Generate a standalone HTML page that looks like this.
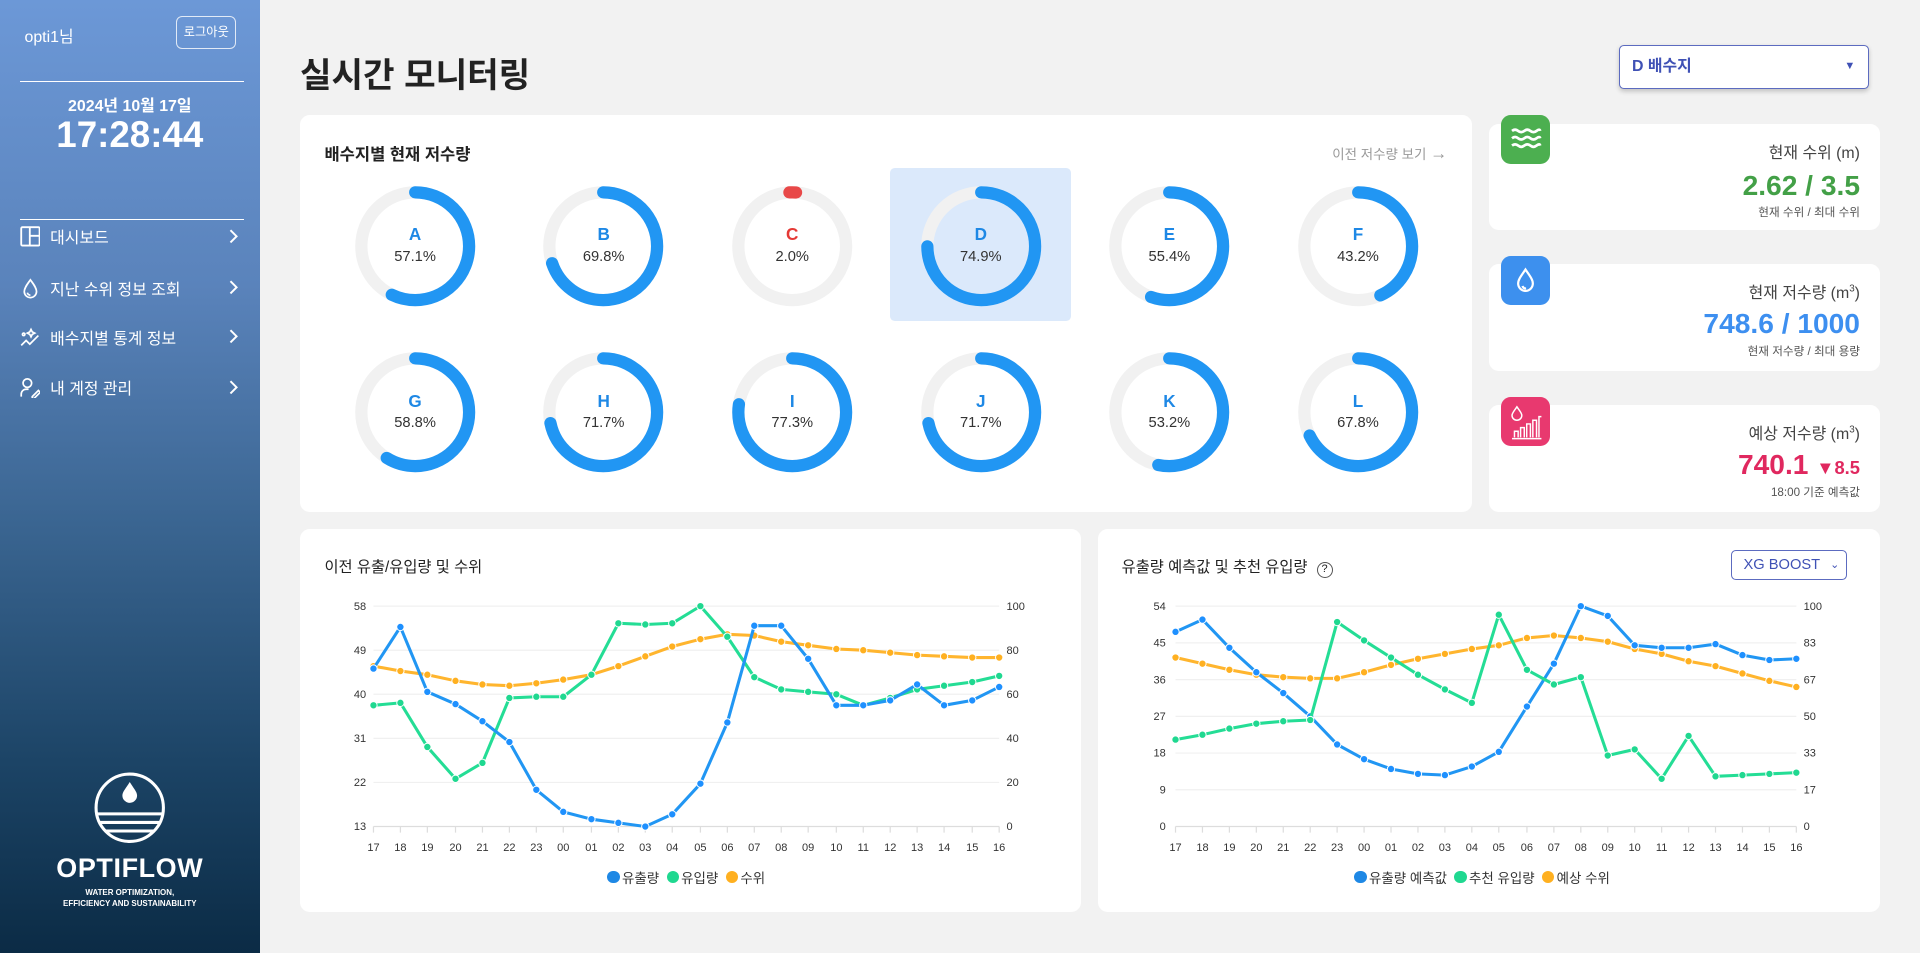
<!DOCTYPE html>
<html><head><meta charset="utf-8">
<style>
*{margin:0;padding:0;box-sizing:border-box}
html,body{width:1920px;height:953px;overflow:hidden;background:#f2f2f2}
body{font-family:"Liberation Sans","Noto Sans CJK KR",sans-serif;color:#222}
#w{position:relative;width:1568px;height:778px;zoom:1.22449;background:#f2f2f2}
.a{position:absolute}
#side{left:0;top:0;width:212px;height:778px;background:linear-gradient(180deg,#6c98d7 0%,#5a83bb 30%,#3a6591 55%,#1c4466 80%,#0b2b45 100%);color:#fff}
.card{background:#fff;border-radius:8px}
.menu{left:16px;font-size:13px;display:flex;align-items:center;width:180px}
.menu span{margin-left:8px}
.menu .ch{position:absolute;right:0;top:3px}
.dn{width:100px;height:100px;text-align:center}
.dn b{position:absolute;left:0;right:0;top:32px;font-size:14px;color:#1e88e5}
.dn i{position:absolute;left:0;right:0;top:52px;font-size:12px;font-style:normal;color:#333}
.st{text-align:right;right:16px}
.lab{font-size:13px;color:#444}
.val{font-size:23px;font-weight:bold}
.sub{font-size:9.5px;color:#555}
.ic{width:40px;height:40px;border-radius:8px}
.ax{font-size:9px;fill:#333;font-family:"Liberation Sans",sans-serif}
.lg{font-size:11px;color:#333;display:flex;align-items:center}
.lg em{display:inline-block;width:10px;height:10px;border-radius:50%;margin:0 2px 0 6px}
</style></head><body><div id="w">
<div id="side" class="a">
 <div class="a" style="left:20px;top:20px;font-size:13px">opti1님</div>
 <div class="a" style="left:144px;top:13px;width:49px;height:27px;border:1px solid rgba(255,255,255,.8);border-radius:5px;font-size:10px;line-height:25px;text-align:center">로그아웃</div>
 <div class="a" style="left:16px;top:66px;width:183px;height:1px;background:#fff"></div>
 <div class="a" style="left:0;width:212px;top:76px;text-align:center;font-size:13px;font-weight:bold">2024년 10월 17일</div>
 <div class="a" style="left:0;width:212px;top:93px;text-align:center;font-size:30px;font-weight:bold">17:28:44</div>
 <div class="a" style="left:16px;top:179px;width:183px;height:1px;background:#fff"></div>
 <div class="a menu" style="top:184px"><svg width="17" height="17" viewBox="0 0 17 17" fill="none" stroke="#fff" stroke-width="1.5"><rect x="1" y="1" width="15" height="15" rx="1"/><path d="M8 1v15M8 8h8"/></svg><span>대시보드</span><svg class="ch" width="10" height="12"><path d="M2 1l5 5-5 5" fill="none" stroke="#fff" stroke-width="1.6"/></svg></div>
 <div class="a menu" style="top:226px"><svg width="17" height="17" viewBox="0 0 17 17" fill="none" stroke="#fff" stroke-width="1.4"><path d="M8.5 1.5C6 5 3.5 8 3.5 11a5 5 0 0 0 10 0c0-3-2.5-6-5-9.5z"/><path d="M6 12a2.5 2.5 0 0 0 2.5 2"/></svg><span>지난 수위 정보 조회</span><svg class="ch" width="10" height="12"><path d="M2 1l5 5-5 5" fill="none" stroke="#fff" stroke-width="1.6"/></svg></div>
 <div class="a menu" style="top:266px"><svg width="17" height="17" viewBox="0 0 17 17" fill="none" stroke="#fff" stroke-width="1.4"><path d="M1 15l4-4 3 3 7-7"/><path d="M9 2l1 2 2 1-2 1-1 2-1-2-2-1 2-1z"/><circle cx="3" cy="6" r="1"/></svg><span>배수지별 통계 정보</span><svg class="ch" width="10" height="12"><path d="M2 1l5 5-5 5" fill="none" stroke="#fff" stroke-width="1.6"/></svg></div>
 <div class="a menu" style="top:307px"><svg width="17" height="17" viewBox="0 0 17 17" fill="none" stroke="#fff" stroke-width="1.4"><circle cx="6" cy="5" r="3.5"/><path d="M1 16v-2a4 4 0 0 1 4-4h2"/><path d="M10 16l5-5 1.5 1.5-5 5H10z"/></svg><span>내 계정 관리</span><svg class="ch" width="10" height="12"><path d="M2 1l5 5-5 5" fill="none" stroke="#fff" stroke-width="1.6"/></svg></div>
 <svg class="a" style="left:76px;top:630px" width="60" height="60" viewBox="0 0 60 60" fill="none" stroke="#fff" stroke-width="2.5"><circle cx="30" cy="30" r="27.5"/><path d="M30 9c-3 5-6 8-6 11a6 6 0 0 0 12 0c0-3-3-6-6-11z" fill="#fff" stroke="none"/><path d="M4 35h52M6 42h48M10 49h40"/></svg>
 <div class="a" style="left:0;width:212px;top:697px;text-align:center;font-size:22px;font-weight:bold;letter-spacing:.5px">OPTIFLOW</div>
 <div class="a" style="left:0;width:212px;top:724px;text-align:center;font-size:6.5px;line-height:9.5px;font-weight:bold">WATER OPTIMIZATION,<br>EFFICIENCY AND SUSTAINABILITY</div>
</div>

<div class="a" style="left:245px;top:38px;font-size:28px;font-weight:bold;color:#222">실시간 모니터링</div>
<div class="a" style="left:1322px;top:37px;width:204px;height:36px;background:#fff;border:1px solid #5c6bc0;border-radius:4px;box-shadow:0 2px 4px rgba(0,0,0,.2);font-size:13px;color:#3f51b5;line-height:34px;padding-left:10px;font-weight:bold">D 배수지<span style="position:absolute;right:10px;font-size:9px">▼</span></div>

<div class="a card" style="left:245px;top:94px;width:957px;height:324px"></div>
<div class="a" style="left:265px;top:115px;font-size:13.5px;font-weight:bold">배수지별 현재 저수량</div>
<div class="a" style="left:1088px;top:117px;font-size:11px;color:#999">이전 저수량 보기 <span style="font-size:14px">→</span></div>
<div class="a" style="left:727px;top:137px;width:148px;height:125px;background:#dbe9fb;border-radius:4px"></div>

<svg width="0" height="0" style="position:absolute"><defs>
<g id="tr"><circle cx="50" cy="50" r="44" fill="none" stroke="#f1f1f1" stroke-width="10"/></g>
</defs></svg>

<div class="a dn" style="left:289px;top:151px"><svg width="100" height="100"><use href="#tr"/><circle cx="50" cy="50" r="44" fill="none" stroke="#2196f3" stroke-width="10" stroke-linecap="round" stroke-dasharray="157.9 400" transform="rotate(-90 50 50)"/></svg><b>A</b><i>57.1%</i></div>
<div class="a dn" style="left:443px;top:151px"><svg width="100" height="100"><use href="#tr"/><circle cx="50" cy="50" r="44" fill="none" stroke="#2196f3" stroke-width="10" stroke-linecap="round" stroke-dasharray="193 400" transform="rotate(-90 50 50)"/></svg><b>B</b><i>69.8%</i></div>
<div class="a dn" style="left:597px;top:151px"><svg width="100" height="100"><use href="#tr"/><circle cx="50" cy="50" r="44" fill="none" stroke="#e84848" stroke-width="10" stroke-linecap="round" stroke-dasharray="5.5 400" transform="rotate(-93 50 50)"/></svg><b style="color:#e53935">C</b><i>2.0%</i></div>
<div class="a dn" style="left:751px;top:151px"><svg width="100" height="100"><use href="#tr"/><circle cx="50" cy="50" r="44" fill="none" stroke="#2196f3" stroke-width="10" stroke-linecap="round" stroke-dasharray="207 400" transform="rotate(-90 50 50)"/></svg><b>D</b><i>74.9%</i></div>
<div class="a dn" style="left:905px;top:151px"><svg width="100" height="100"><use href="#tr"/><circle cx="50" cy="50" r="44" fill="none" stroke="#2196f3" stroke-width="10" stroke-linecap="round" stroke-dasharray="153.2 400" transform="rotate(-90 50 50)"/></svg><b>E</b><i>55.4%</i></div>
<div class="a dn" style="left:1059px;top:151px"><svg width="100" height="100"><use href="#tr"/><circle cx="50" cy="50" r="44" fill="none" stroke="#2196f3" stroke-width="10" stroke-linecap="round" stroke-dasharray="119.5 400" transform="rotate(-90 50 50)"/></svg><b>F</b><i>43.2%</i></div>
<div class="a dn" style="left:289px;top:287px"><svg width="100" height="100"><use href="#tr"/><circle cx="50" cy="50" r="44" fill="none" stroke="#2196f3" stroke-width="10" stroke-linecap="round" stroke-dasharray="162.6 400" transform="rotate(-90 50 50)"/></svg><b>G</b><i>58.8%</i></div>
<div class="a dn" style="left:443px;top:287px"><svg width="100" height="100"><use href="#tr"/><circle cx="50" cy="50" r="44" fill="none" stroke="#2196f3" stroke-width="10" stroke-linecap="round" stroke-dasharray="198.2 400" transform="rotate(-90 50 50)"/></svg><b>H</b><i>71.7%</i></div>
<div class="a dn" style="left:597px;top:287px"><svg width="100" height="100"><use href="#tr"/><circle cx="50" cy="50" r="44" fill="none" stroke="#2196f3" stroke-width="10" stroke-linecap="round" stroke-dasharray="213.7 400" transform="rotate(-90 50 50)"/></svg><b>I</b><i>77.3%</i></div>
<div class="a dn" style="left:751px;top:287px"><svg width="100" height="100"><use href="#tr"/><circle cx="50" cy="50" r="44" fill="none" stroke="#2196f3" stroke-width="10" stroke-linecap="round" stroke-dasharray="198.2 400" transform="rotate(-90 50 50)"/></svg><b>J</b><i>71.7%</i></div>
<div class="a dn" style="left:905px;top:287px"><svg width="100" height="100"><use href="#tr"/><circle cx="50" cy="50" r="44" fill="none" stroke="#2196f3" stroke-width="10" stroke-linecap="round" stroke-dasharray="147.1 400" transform="rotate(-90 50 50)"/></svg><b>K</b><i>53.2%</i></div>
<div class="a dn" style="left:1059px;top:287px"><svg width="100" height="100"><use href="#tr"/><circle cx="50" cy="50" r="44" fill="none" stroke="#2196f3" stroke-width="10" stroke-linecap="round" stroke-dasharray="187.5 400" transform="rotate(-90 50 50)"/></svg><b>L</b><i>67.8%</i></div>

<div class="a card" style="left:1216px;top:101px;width:319px;height:87px"></div>
<div class="a card" style="left:1216px;top:216px;width:319px;height:87px"></div>
<div class="a card" style="left:1216px;top:331px;width:319px;height:87px"></div>
<div class="a ic" style="left:1226px;top:94px;background:#4caf50"><svg width="40" height="40" fill="none" stroke="#fff" stroke-width="2.2"><path d="M9 13q2.5-2 5 0t5 0 5 0 5 0 3 0M9 19q2.5-2 5 0t5 0 5 0 5 0 3 0M9 25q2.5-2 5 0t5 0 5 0 5 0 3 0"/></svg></div>
<div class="a ic" style="left:1226px;top:209px;background:#3d90ee"><svg width="40" height="40" fill="none" stroke="#fff" stroke-width="1.8"><path d="M20 11c-3 4.5-6 8-6 11.5a6 6 0 0 0 12 0c0-3.5-3-7-6-11.5z"/><path d="M17.5 24.5a3 3 0 0 0 3 2"/></svg></div>
<div class="a ic" style="left:1226px;top:324px;background:#e8396f"><svg width="40" height="40" fill="none" stroke="#fff" stroke-width="1.2"><path d="M13 8c-2 3-4 5-4 7a4 4 0 0 0 8 0c0-2-2-4-4-7z"/><path d="M9 34h24M11 33v-5h3v5M16 33v-8h3v8M21 33v-11h3v11M26 33v-14h3v14M31 33v-17h2"/></svg></div>
<div class="a st" style="top:114px;width:300px;left:1219px"><div class="lab">현재 수위 (m)</div><div class="val" style="color:#43a047;margin-top:6px">2.62 / 3.5</div><div class="sub" style="margin-top:2px">현재 수위 / 최대 수위</div></div>
<div class="a st" style="top:229px;width:300px;left:1219px"><div class="lab">현재 저수량 (m<sup style="font-size:8px">3</sup>)</div><div class="val" style="color:#3d8ff0;margin-top:4px">748.6 / 1000</div><div class="sub" style="margin-top:2px">현재 저수량 / 최대 용량</div></div>
<div class="a st" style="top:344px;width:300px;left:1219px"><div class="lab">예상 저수량 (m<sup style="font-size:8px">3</sup>)</div><div class="val" style="color:#e0285f;margin-top:4px">740.1 <span style="font-size:15px">▼8.5</span></div><div class="sub" style="margin-top:2px">18:00 기준 예측값</div></div>

<div class="a card" style="left:245px;top:432px;width:638px;height:313px"></div>
<div class="a card" style="left:897px;top:432px;width:638px;height:313px"></div>
<div class="a" style="left:265px;top:453px;font-size:12.5px">이전 유출/유입량 및 수위</div>
<div class="a" style="left:916px;top:453px;font-size:12.5px">유출량 예측값 및 추천 유입량 <span style="display:inline-block;width:13px;height:13px;border:1px solid #555;border-radius:50%;font-size:9px;text-align:center;line-height:11px;margin-left:4px">?</span></div>
<div class="a" style="left:1414px;top:449px;width:94px;height:25px;border:1px solid #5c6bc0;border-radius:4px;font-size:12px;color:#3f51b5;line-height:23px;padding-left:9px">XG BOOST<span style="position:absolute;right:5px;font-size:9px">⌄</span></div>

<svg class="a" style="left:0;top:0" width="1568" height="778">
<defs>
<marker id="mb" markerUnits="userSpaceOnUse" markerWidth="8" markerHeight="8" refX="4" refY="4"><circle cx="4" cy="4" r="3" fill="#1e90ff" stroke="#fff" stroke-width=".8"/></marker>
<marker id="mg" markerUnits="userSpaceOnUse" markerWidth="8" markerHeight="8" refX="4" refY="4"><circle cx="4" cy="4" r="3" fill="#1fd890" stroke="#fff" stroke-width=".8"/></marker>
<marker id="mo" markerUnits="userSpaceOnUse" markerWidth="8" markerHeight="8" refX="4" refY="4"><circle cx="4" cy="4" r="3" fill="#ffb020" stroke="#fff" stroke-width=".8"/></marker>
</defs>
<g stroke="#f0f0f0" stroke-width="1">
<path d="M305 495H816M305 531H816M305 567H816M305 603H816M305 639H816"/>
<path d="M960 495H1467M960 525H1467M960 555H1467M960 585H1467M960 615H1467M960 645H1467"/>
</g>
<g stroke="#ddd"><path d="M305 675H816M960 675H1467"/>
<path d="M305 675v5M327 675v5M349 675v5M372 675v5M394 675v5M416 675v5M438 675v5M460 675v5M483 675v5M505 675v5M527 675v5M549 675v5M572 675v5M594 675v5M616 675v5M638 675v5M660 675v5M683 675v5M705 675v5M727 675v5M749 675v5M771 675v5M794 675v5M816 675v5"/>
<path d="M960 675v5M982 675v5M1004 675v5M1026 675v5M1048 675v5M1070 675v5M1092 675v5M1114 675v5M1136 675v5M1158 675v5M1180 675v5M1202 675v5M1224 675v5M1247 675v5M1269 675v5M1291 675v5M1313 675v5M1335 675v5M1357 675v5M1379 675v5M1401 675v5M1423 675v5M1445 675v5M1467 675v5"/></g>
<g class="ax" text-anchor="end"><text x="299" y="498">58</text><text x="299" y="534">49</text><text x="299" y="570">40</text><text x="299" y="606">31</text><text x="299" y="642">22</text><text x="299" y="678">13</text>
<text x="952" y="498">54</text><text x="952" y="528">45</text><text x="952" y="558">36</text><text x="952" y="588">27</text><text x="952" y="618">18</text><text x="952" y="648">9</text><text x="952" y="678">0</text></g>
<g class="ax" text-anchor="start"><text x="822" y="498">100</text><text x="822" y="534">80</text><text x="822" y="570">60</text><text x="822" y="606">40</text><text x="822" y="642">20</text><text x="822" y="678">0</text>
<text x="1473" y="498">100</text><text x="1473" y="528">83</text><text x="1473" y="558">67</text><text x="1473" y="588">50</text><text x="1473" y="618">33</text><text x="1473" y="648">17</text><text x="1473" y="678">0</text></g>
<g class="ax" text-anchor="middle">
<text x="305" y="695">17</text><text x="327" y="695">18</text><text x="349" y="695">19</text><text x="372" y="695">20</text><text x="394" y="695">21</text><text x="416" y="695">22</text><text x="438" y="695">23</text><text x="460" y="695">00</text><text x="483" y="695">01</text><text x="505" y="695">02</text><text x="527" y="695">03</text><text x="549" y="695">04</text><text x="572" y="695">05</text><text x="594" y="695">06</text><text x="616" y="695">07</text><text x="638" y="695">08</text><text x="660" y="695">09</text><text x="683" y="695">10</text><text x="705" y="695">11</text><text x="727" y="695">12</text><text x="749" y="695">13</text><text x="771" y="695">14</text><text x="794" y="695">15</text><text x="816" y="695">16</text>
<text x="960" y="695">17</text><text x="982" y="695">18</text><text x="1004" y="695">19</text><text x="1026" y="695">20</text><text x="1048" y="695">21</text><text x="1070" y="695">22</text><text x="1092" y="695">23</text><text x="1114" y="695">00</text><text x="1136" y="695">01</text><text x="1158" y="695">02</text><text x="1180" y="695">03</text><text x="1202" y="695">04</text><text x="1224" y="695">05</text><text x="1247" y="695">06</text><text x="1269" y="695">07</text><text x="1291" y="695">08</text><text x="1313" y="695">09</text><text x="1335" y="695">10</text><text x="1357" y="695">11</text><text x="1379" y="695">12</text><text x="1401" y="695">13</text><text x="1423" y="695">14</text><text x="1445" y="695">15</text><text x="1467" y="695">16</text>
</g>
<g fill="none" stroke-width="2.5" stroke-linejoin="round">
<polyline stroke="#ffb52e" marker-start="url(#mo)" marker-mid="url(#mo)" marker-end="url(#mo)" points="305,544 327,548 349,551 372,556 394,559 416,560 438,558 460,555 483,551 505,544 527,536 549,528 572,522 594,518 616,519 638,524 660,527 683,530 705,531 727,533 749,535 771,536 794,537 816,537"/>
<polyline stroke="#24dd95" marker-start="url(#mg)" marker-mid="url(#mg)" marker-end="url(#mg)" points="305,576 327,574 349,610 372,636 394,623 416,570 438,569 460,569 483,551 505,509 527,510 549,509 572,495 594,520 616,553 638,563 660,565 683,567 705,576 727,570 749,563 771,560 794,557 816,552"/>
<polyline stroke="#2196f3" marker-start="url(#mb)" marker-mid="url(#mb)" marker-end="url(#mb)" points="305,546 327,512 349,565 372,575 394,589 416,606 438,645 460,663 483,669 505,672 527,675 549,665 572,640 594,590 616,511 638,511 660,538 683,576 705,576 727,572 749,559 771,576 794,572 816,561"/>
<polyline stroke="#ffb52e" marker-start="url(#mo)" marker-mid="url(#mo)" marker-end="url(#mo)" points="960,537 982,542 1004,547 1026,551 1048,553 1070,554 1092,554 1114,549 1136,543 1158,538 1180,534 1202,530 1224,527 1247,521 1269,519 1291,521 1313,524 1335,530 1357,534 1379,540 1401,544 1423,550 1445,556 1467,561"/>
<polyline stroke="#2196f3" marker-start="url(#mb)" marker-mid="url(#mb)" marker-end="url(#mb)" points="960,516 982,506 1004,529 1026,549 1048,566 1070,585 1092,608 1114,620 1136,628 1158,632 1180,633 1202,626 1224,614 1247,577 1269,542 1291,495 1313,503 1335,527 1357,529 1379,529 1401,526 1423,535 1445,539 1467,538"/>
<polyline stroke="#24dd95" marker-start="url(#mg)" marker-mid="url(#mg)" marker-end="url(#mg)" points="960,604 982,600 1004,595 1026,591 1048,589 1070,588 1092,508 1114,523 1136,537 1158,551 1180,563 1202,574 1224,502 1247,547 1269,559 1291,553 1313,617 1335,612 1357,636 1379,601 1401,634 1423,633 1445,632 1467,631"/>
</g>
</svg>
<div class="a lg" style="left:490px;top:708px"><em style="background:#1e88e5"></em>유출량<em style="background:#1fd890"></em>유입량<em style="background:#ffb020"></em>수위</div>
<div class="a lg" style="left:1100px;top:708px"><em style="background:#1e88e5"></em>유출량 예측값 <em style="background:#1fd890"></em>추천 유입량 <em style="background:#ffb020"></em>예상 수위</div>
</div></body></html>
